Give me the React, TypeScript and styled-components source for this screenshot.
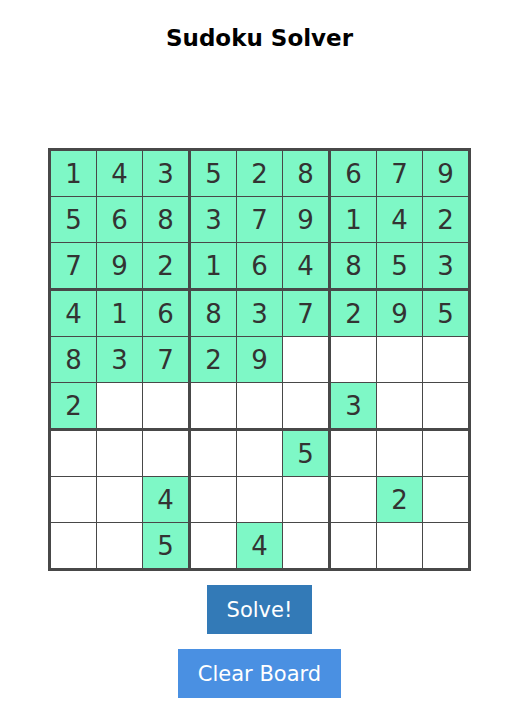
import { createGlobalStyle } from "styled-components";
import styled from "styled-components";

const GlobalStyle = createGlobalStyle`
  body {
    margin: 8px;
    background: #fff;
    font-family: "DejaVu Sans", "Liberation Sans", sans-serif;
  }
`;

const board: (number | null)[][] = [
  [1, 4, 3, 5, 2, 8, 6, 7, 9],
  [5, 6, 8, 3, 7, 9, 1, 4, 2],
  [7, 9, 2, 1, 6, 4, 8, 5, 3],
  [4, 1, 6, 8, 3, 7, 2, 9, 5],
  [8, 3, 7, 2, 9, null, null, null, null],
  [2, null, null, null, null, null, 3, null, null],
  [null, null, null, null, null, 5, null, null, null],
  [null, null, 4, null, null, null, null, 2, null],
  [null, null, 5, null, 4, null, null, null, null],
];

const App = () => {
  return (
    <>
      <GlobalStyle />
      <Page>
        <Title>Sudoku Solver</Title>
        <Board>
          {board.map((row, r) =>
            row.map((val, c) => (
              <Cell
                key={`${r}-${c}`}
                $filled={val !== null}
                $thickRight={c === 2 || c === 5}
                $thickBottom={r === 2 || r === 5}
              >
                {val ?? ""}
              </Cell>
            ))
          )}
        </Board>
        <SolveButton>Solve!</SolveButton>
        <ClearButton>Clear Board</ClearButton>
      </Page>
    </>
  );
};

const Page = styled.div`
  display: flex;
  flex-direction: column;
  align-items: center;
  padding-left: 11px;
`;

const Title = styled.h1`
  font-size: 23px;
  font-weight: 700;
  color: #000;
  margin: 17px 0 0;
  height: 123px;
`;

const Board = styled.div`
  display: grid;
  grid-template-columns: repeat(9, auto);
  gap: 1px;
  background: #484848;
  border: 3px solid #484848;
`;

const Cell = styled.div<{ $filled: boolean; $thickRight: boolean; $thickBottom: boolean }>`
  width: 45px;
  height: 45px;
  display: flex;
  align-items: center;
  justify-content: center;
  background: ${(p) => (p.$filled ? "#7ef8c6" : "#fff")};
  color: #333;
  font-size: 26px;
  margin-right: ${(p) => (p.$thickRight ? "2px" : "0")};
  margin-bottom: ${(p) => (p.$thickBottom ? "2px" : "0")};
`;

const SolveButton = styled.button`
  margin-top: 14px;
  height: 49px;
  padding: 0 20px;
  border: none;
  background: #337ab7;
  color: #fff;
  font-family: inherit;
  font-size: 21px;
`;

const ClearButton = styled.button`
  margin-top: 15px;
  height: 49px;
  padding: 0 20px;
  border: none;
  background: #4a90e2;
  color: #fff;
  font-family: inherit;
  font-size: 21px;
`;

export default App;
